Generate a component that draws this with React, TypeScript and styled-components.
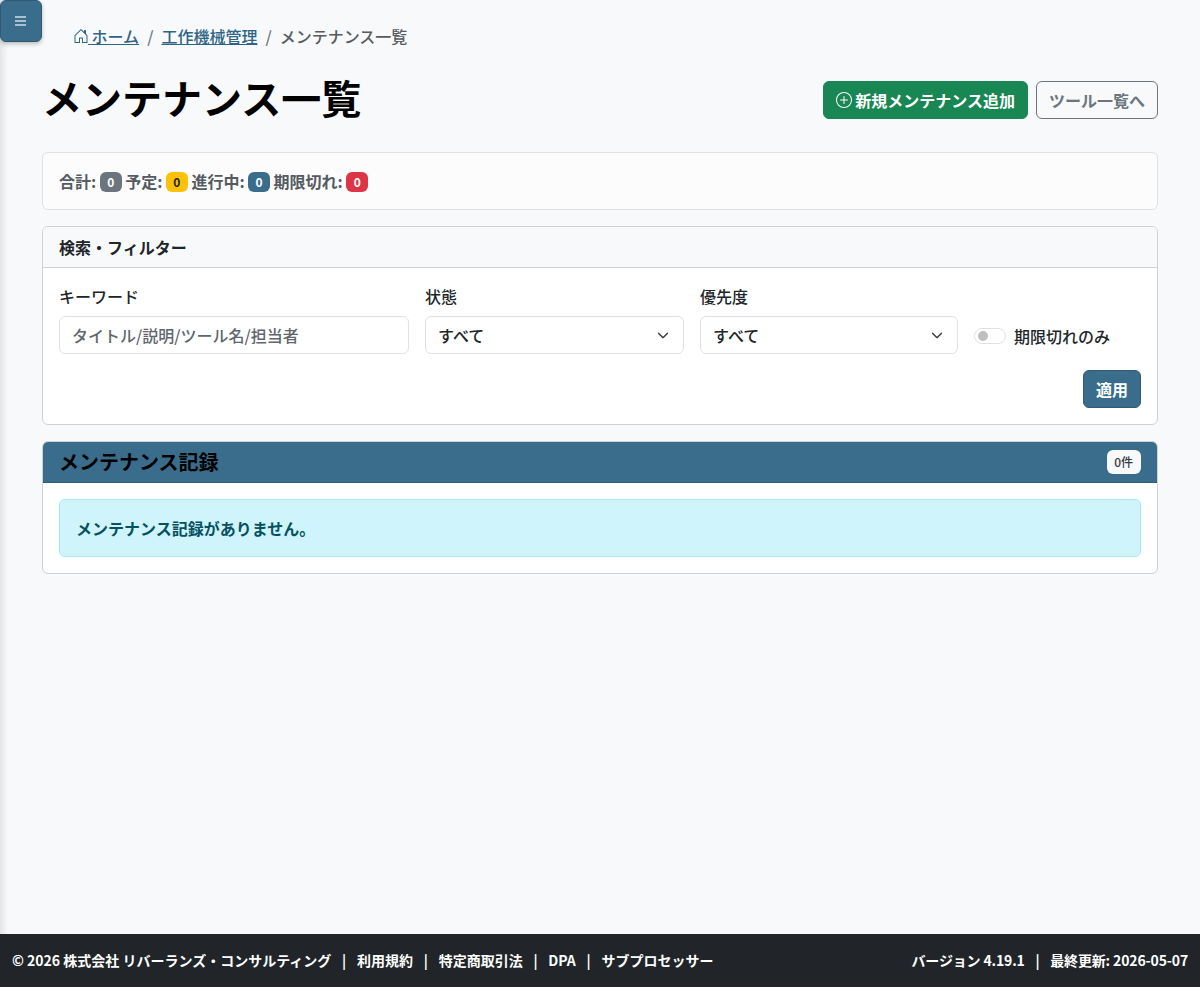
import React from 'react';
import styled, { createGlobalStyle } from 'styled-components';

const GlobalStyle = createGlobalStyle`
  html, body {
    margin: 0;
    padding: 0;
  }
  body {
    background: #f8f9fa;
    color: #212529;
    font-family: "Noto Sans CJK JP", "Noto Sans", sans-serif;
    font-size: 16px;
    font-weight: 500;
    line-height: 1.5;
  }
  * {
    box-sizing: border-box;
  }
`;

const Page = styled.div`
  min-height: 987px;
  display: flex;
  flex-direction: column;
`;

const SidebarShadow = styled.div`
  position: absolute;
  top: 0;
  left: 0;
  bottom: 53px;
  width: 8px;
  background: linear-gradient(to right, #e4e5e7, #f8f9fa);
`;

const MenuButton = styled.button`
  position: absolute;
  top: 0;
  left: 0;
  display: flex;
  align-items: center;
  justify-content: center;
  width: 42px;
  height: 42px;
  padding: 0;
  background: #3a6d8c;
  border: 1px solid #2f5a75;
  border-radius: 6px;
  box-shadow: 0 2px 4px rgba(0, 0, 0, 0.25);
  color: #a9c0cf;
`;

const Main = styled.main`
  flex: 1;
  padding: 23px 42px 0;
`;

const Breadcrumb = styled.nav`
  display: flex;
  align-items: center;
  padding-left: 31px;
  height: 26px;
  color: #555b61;
  margin-bottom: 18px;
`;

const Crumb = styled.a`
  display: inline-flex;
  align-items: center;
  color: #2f6485;
  text-decoration: underline;

  svg {
    margin-right: -1px;
  }
`;

const CrumbSep = styled.span`
  color: #6c757d;
  padding: 0 8px;
`;

const TitleRow = styled.div`
  display: flex;
  align-items: center;
  justify-content: space-between;
  margin-bottom: 25px;
`;

const Title = styled.h1`
  margin: 0;
  color: #000;
  font-size: 40px;
  font-weight: 700;
  line-height: 60px;
`;

const Actions = styled.div`
  display: flex;
  gap: 8px;
  padding-top: 6px;
`;

const Button = styled.button<{ $variant: 'success' | 'outline' | 'primary' }>`
  display: inline-flex;
  align-items: center;
  gap: 3px;
  height: 38px;
  padding: 0 12px;
  border-radius: 6px;
  font-family: inherit;
  font-size: 16px;
  font-weight: 700;
  border: 1px solid
    ${p => (p.$variant === 'success' ? '#198754' : p.$variant === 'primary' ? '#2f5a75' : '#6c757d')};
  background: ${p => (p.$variant === 'success' ? '#198754' : p.$variant === 'primary' ? '#3a6d8c' : 'transparent')};
  color: ${p => (p.$variant === 'outline' ? '#6c757d' : '#fff')};
`;

const Card = styled.section<{ $soft?: boolean }>`
  background: ${p => (p.$soft ? '#fcfcfd' : '#fff')};
  border: 1px solid ${p => (p.$soft ? '#dee2e6' : '#ced1d5')};
  border-radius: 6px;
  margin-bottom: 16px;
  overflow: hidden;
`;

const StatsBody = styled.div`
  display: flex;
  align-items: center;
  gap: 3.5px;
  height: 56px;
  padding: 0 16px;
  color: #555b61;
  font-weight: 700;
`;

const Badge = styled.span<{ $bg: string; $dark?: boolean }>`
  display: inline-block;
  min-width: 22px;
  height: 20px;
  margin-top: 2px;
  padding: 0 7px;
  border-radius: 6px;
  background: ${p => p.$bg};
  color: ${p => (p.$dark ? '#212529' : '#fff')};
  font-size: 12px;
  font-weight: 700;
  line-height: 20px;
  text-align: center;
`;

const FilterHeader = styled.header`
  height: 41px;
  padding: 0 16px;
  display: flex;
  align-items: center;
  background: #f8f9fa;
  border-bottom: 1px solid #ced1d5;
  color: #212529;
  font-weight: 700;
`;

const FilterBody = styled.div`
  padding: 16px;
`;

const FilterGrid = styled.div`
  display: grid;
  grid-template-columns: 350px 259px 258px 1fr;
  column-gap: 16px;
  align-items: end;
`;

const Field = styled.div`
  display: flex;
  flex-direction: column;
`;

const Label = styled.label`
  height: 24px;
  margin-bottom: 8px;
  color: #212529;
`;

const TextInput = styled.div`
  height: 38px;
  padding: 0 12px;
  display: flex;
  align-items: center;
  background: #fff;
  border: 1px solid #dee2e6;
  border-radius: 6px;
  color: #5f666d;
`;

const Select = styled.div`
  height: 38px;
  padding: 0 12px;
  display: flex;
  align-items: center;
  justify-content: space-between;
  background: #fff;
  border: 1px solid #dee2e6;
  border-radius: 6px;
  color: #212529;
`;

const SwitchRow = styled.div`
  display: flex;
  align-items: center;
  gap: 8px;
  height: 38px;
  padding-top: 2px;
`;

const Switch = styled.span`
  position: relative;
  display: block;
  width: 32px;
  height: 16px;
  border: 1px solid #dee2e6;
  border-radius: 8px;
  background: #fff;

  &::before {
    content: '';
    position: absolute;
    top: 2px;
    left: 3px;
    width: 10px;
    height: 10px;
    border-radius: 50%;
    background: #bfbfbf;
  }
`;

const ApplyRow = styled.div`
  display: flex;
  justify-content: flex-end;
  margin-top: 16px;
`;

const RecordsHeader = styled.header`
  height: 41px;
  padding: 0 16px;
  display: flex;
  align-items: center;
  justify-content: space-between;
  background: #3a6d8c;
  border-bottom: 1px solid #2f5a75;
`;

const RecordsTitle = styled.h2`
  margin: 0;
  color: #000;
  font-size: 20px;
  font-weight: 700;
`;

const CountPill = styled.span`
  display: inline-block;
  height: 24px;
  padding: 0 8px 0 7px;
  background: #f8f9fa;
  border-radius: 6px;
  color: #343a40;
  font-size: 12px;
  line-height: 24px;
`;

const RecordsBody = styled.div`
  padding: 16px;
`;

const Alert = styled.div`
  height: 58px;
  padding: 0 16px;
  display: flex;
  align-items: center;
  background: #cff4fc;
  border: 1px solid #9eeaf9;
  border-radius: 6px;
  color: #055160;
  font-weight: 700;
`;

const Footer = styled.footer`
  height: 53px;
  padding: 0 12px;
  display: flex;
  align-items: center;
  justify-content: space-between;
  background: #212529;
  color: #fff;
  font-size: 14px;
  font-weight: 700;
`;

const FooterGroup = styled.div<{ $tight?: boolean }>`
  display: flex;
  align-items: center;
  letter-spacing: ${p => (p.$tight ? '-0.15px' : '0')};
`;

const FooterSep = styled.span`
  padding: 0 10.75px;
`;

const HomeIcon = () => (
  <svg width="16" height="16" viewBox="0 0 16 16" fill="currentColor">
    <path d="M8.354 1.146a.5.5 0 0 0-.708 0l-6 6A.5.5 0 0 0 1.5 7.5v7a.5.5 0 0 0 .5.5h4.5a.5.5 0 0 0 .5-.5v-4h2v4a.5.5 0 0 0 .5.5H14a.5.5 0 0 0 .5-.5v-7a.5.5 0 0 0-.146-.354L13 5.793V2.5a.5.5 0 0 0-.5-.5h-1a.5.5 0 0 0-.5.5v1.293zM2.5 14V7.707l5.5-5.5 5.5 5.5V14H10v-4a.5.5 0 0 0-.5-.5h-3a.5.5 0 0 0-.5.5v4z" />
  </svg>
);

const PlusCircleIcon = () => (
  <svg width="16" height="16" viewBox="0 0 16 16" fill="currentColor">
    <path d="M8 15A7 7 0 1 1 8 1a7 7 0 0 1 0 14m0 1A8 8 0 1 0 8 0a8 8 0 0 0 0 16" />
    <path d="M8 4a.5.5 0 0 1 .5.5v3h3a.5.5 0 0 1 0 1h-3v3a.5.5 0 0 1-1 0v-3h-3a.5.5 0 0 1 0-1h3v-3A.5.5 0 0 1 8 4" />
  </svg>
);

const ChevronIcon = () => (
  <svg width="16" height="16" viewBox="0 0 16 16" fill="none">
    <path d="m2 5 6 6 6-6" stroke="#343a40" strokeWidth="1.8" strokeLinecap="round" strokeLinejoin="round" transform="translate(2 2.4) scale(.75)" />
  </svg>
);

const BarsIcon = () => (
  <svg width="12" height="10" viewBox="0 0 12 10" fill="currentColor">
    <rect x="0" y="0" width="11" height="2" />
    <rect x="0" y="4" width="11" height="2" />
    <rect x="0" y="8" width="11" height="2" />
  </svg>
);

export default function App() {
  return (
    <Page>
      <GlobalStyle />
      <SidebarShadow />
      <MenuButton>
        <BarsIcon />
      </MenuButton>
      <Main>
        <Breadcrumb>
          <Crumb href="#">
            <HomeIcon />
            &nbsp;ホーム
          </Crumb>
          <CrumbSep>/</CrumbSep>
          <Crumb href="#">工作機械管理</Crumb>
          <CrumbSep>/</CrumbSep>
          <span>メンテナンス一覧</span>
        </Breadcrumb>
        <TitleRow>
          <Title>メンテナンス一覧</Title>
          <Actions>
            <Button $variant="success">
              <PlusCircleIcon />
              新規メンテナンス追加
            </Button>
            <Button $variant="outline">ツール一覧へ</Button>
          </Actions>
        </TitleRow>
        <Card $soft>
          <StatsBody>
            <span>合計:</span>
            <Badge $bg="#6c757d">0</Badge>
            <span>予定:</span>
            <Badge $bg="#ffc107" $dark>0</Badge>
            <span>進行中:</span>
            <Badge $bg="#3a6d8c">0</Badge>
            <span>期限切れ:</span>
            <Badge $bg="#dc3545">0</Badge>
          </StatsBody>
        </Card>
        <Card>
          <FilterHeader>検索・フィルター</FilterHeader>
          <FilterBody>
            <FilterGrid>
              <Field>
                <Label>キーワード</Label>
                <TextInput>タイトル/説明/ツール名/担当者</TextInput>
              </Field>
              <Field>
                <Label>状態</Label>
                <Select>
                  すべて
                  <ChevronIcon />
                </Select>
              </Field>
              <Field>
                <Label>優先度</Label>
                <Select>
                  すべて
                  <ChevronIcon />
                </Select>
              </Field>
              <SwitchRow>
                <Switch />
                期限切れのみ
              </SwitchRow>
            </FilterGrid>
            <ApplyRow>
              <Button $variant="primary">適用</Button>
            </ApplyRow>
          </FilterBody>
        </Card>
        <Card>
          <RecordsHeader>
            <RecordsTitle>メンテナンス記録</RecordsTitle>
            <CountPill>0件</CountPill>
          </RecordsHeader>
          <RecordsBody>
            <Alert>メンテナンス記録がありません。</Alert>
          </RecordsBody>
        </Card>
      </Main>
      <Footer>
        <FooterGroup>
          <span>© 2026 株式会社 リバーランズ・コンサルティング</span>
          <FooterSep>|</FooterSep>
          <span>利用規約</span>
          <FooterSep>|</FooterSep>
          <span>特定商取引法</span>
          <FooterSep>|</FooterSep>
          <span>DPA</span>
          <FooterSep>|</FooterSep>
          <span>サブプロセッサー</span>
        </FooterGroup>
        <FooterGroup $tight>
          <span>バージョン 4.19.1</span>
          <FooterSep>|</FooterSep>
          <span>最終更新: 2026-05-07</span>
        </FooterGroup>
      </Footer>
    </Page>
  );
}
